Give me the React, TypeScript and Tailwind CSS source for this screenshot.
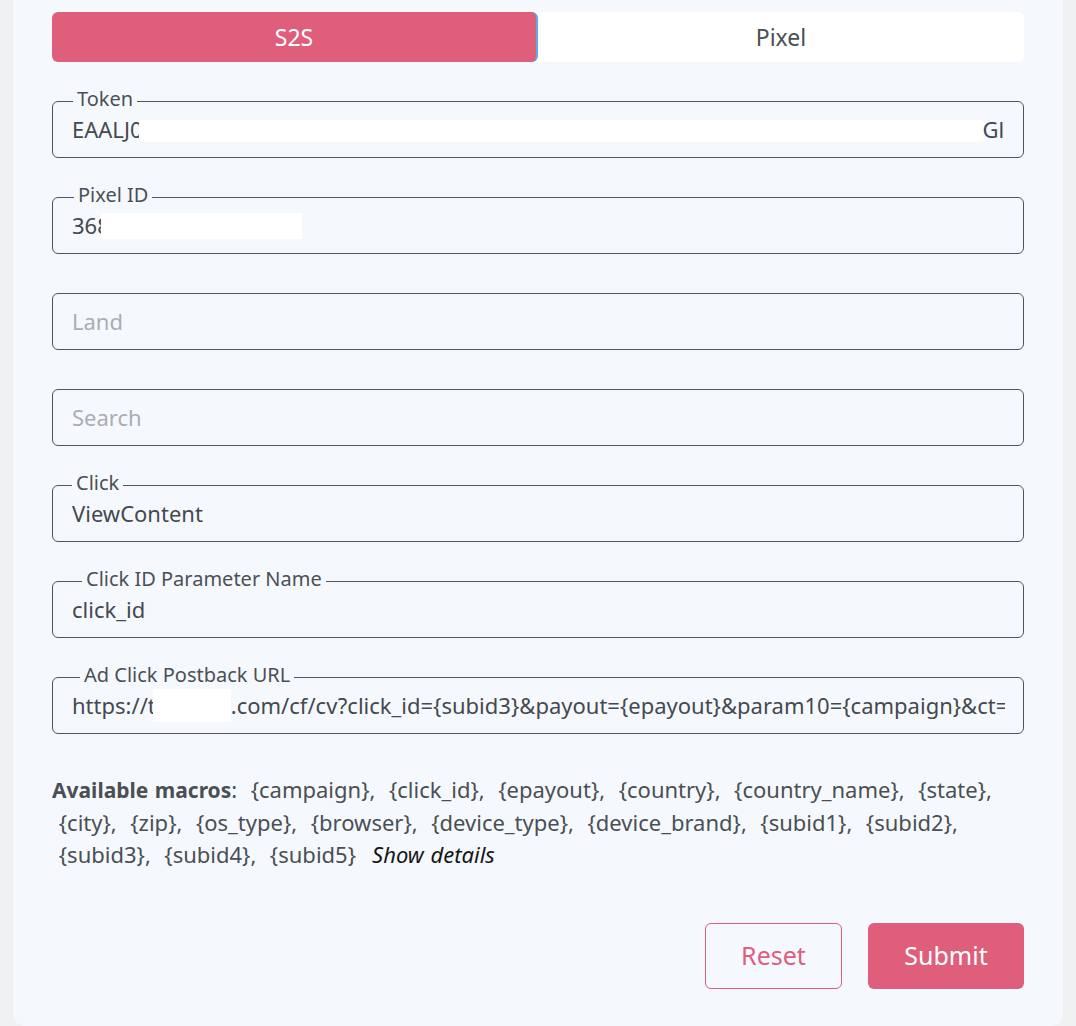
import React from "react";

const PINK = "bg-[#de5e7c]";

type FieldProps = {
  label?: string;
  labelLeft?: string;
  placeholder?: string;
  children?: React.ReactNode;
};

const Field = ({ label, labelLeft = "left-[20px]", placeholder, children }: FieldProps) => {
  return (
    <div className="relative h-[57px] rounded-[6px] border border-[#50555b]">
      {label && (
        <span
          className={`absolute top-[-15px] ${labelLeft} bg-[#f5f9fd] px-[4px] text-[20px] leading-[24px] text-[#4b5057]`}
        >
          {label}
        </span>
      )}
      <div className="flex h-full items-center pl-[19px] pr-[18px] text-[22px] text-[#44494f]">
        <div className="flex min-w-0 flex-1 items-center overflow-hidden whitespace-nowrap">
          {placeholder ? <span className="text-[#a9aeb4]">{placeholder}</span> : children}
        </div>
      </div>
    </div>
  );
};

const macros = [
  "campaign",
  "click_id",
  "epayout",
  "country",
  "country_name",
  "state",
  "city",
  "zip",
  "os_type",
  "browser",
  "device_type",
  "device_brand",
  "subid1",
  "subid2",
  "subid3",
  "subid4",
  "subid5",
];

export default function App() {
  return (
    <div className="min-h-[1026px] bg-[#f0f1f3] font-['Noto_Sans',sans-serif]">
      <div className="ml-[13px] w-[1050px] rounded-b-[12px] bg-[#f5f9fd] px-[39px] pb-[37px] pt-[12px]">
        {/* tabs */}
        <div className="flex h-[50px] rounded-[6px] bg-white">
          <button
            className={`flex w-1/2 items-center justify-center rounded-[6px] border-r-2 border-[#5aaee6] ${PINK} text-[23px] text-white`}
          >
            S2S
          </button>
          <button className="flex w-1/2 items-center justify-center text-[23px] text-[#4a4f55]">
            Pixel
          </button>
        </div>

        <div className="mt-[39px] flex flex-col gap-[39px]">
          <Field label="Token" labelLeft="left-[20px]">
            <span>EAALJ0</span>
            <span className="-ml-[3px] mt-[3px] inline-block h-[22px] w-[845px] shrink-0 rounded-[4px] bg-white" />
            <span className="-ml-[2px]">Gl</span>
          </Field>
          <Field label="Pixel ID" labelLeft="left-[21px]">
            <span>368</span>
            <span className="-ml-[9px] inline-block h-[26px] w-[201px] shrink-0 bg-white" />
          </Field>
          <Field placeholder="Land" />
          <Field placeholder="Search" />
          <Field label="Click" labelLeft="left-[19px]">
            ViewContent
          </Field>
          <Field label="Click ID Parameter Name" labelLeft="left-[29px]">
            click_id
          </Field>
          <Field label="Ad Click Postback URL" labelLeft="left-[27px]">
            <span>https://t</span>
            <span className="-ml-[3px] inline-block h-[33px] w-[78px] shrink-0 bg-white" />
            <span>.com/cf/cv?click_id=&#123;subid3&#125;&amp;payout=&#123;epayout&#125;&amp;param10=&#123;campaign&#125;&amp;ct=</span>
          </Field>
        </div>

        <p className="mt-[39px] text-[22px] leading-[32px] text-[#4a4f55] [word-spacing:1px]">
          <span className="text-[21px] font-bold">Available macros</span>:
          {macros.map((m, i) => (
            <React.Fragment key={m}>
              {" "}
              {"\u00a0"}
              {`{${m}}`}
              {i < macros.length - 1 ? "," : ""}
            </React.Fragment>
          ))}
          <span className="ml-[16px] italic text-[#161616]">Show details</span>
        </p>

        <div className="mt-[53px] flex justify-end gap-[26px]">
          <button className="h-[66px] w-[137px] rounded-[6px] border border-[#de5e7c] text-[25px] text-[#de5e7c]">
            Reset
          </button>
          <button className={`h-[66px] w-[156px] rounded-[6px] ${PINK} text-[25px] text-white`}>
            Submit
          </button>
        </div>
      </div>
    </div>
  );
}
